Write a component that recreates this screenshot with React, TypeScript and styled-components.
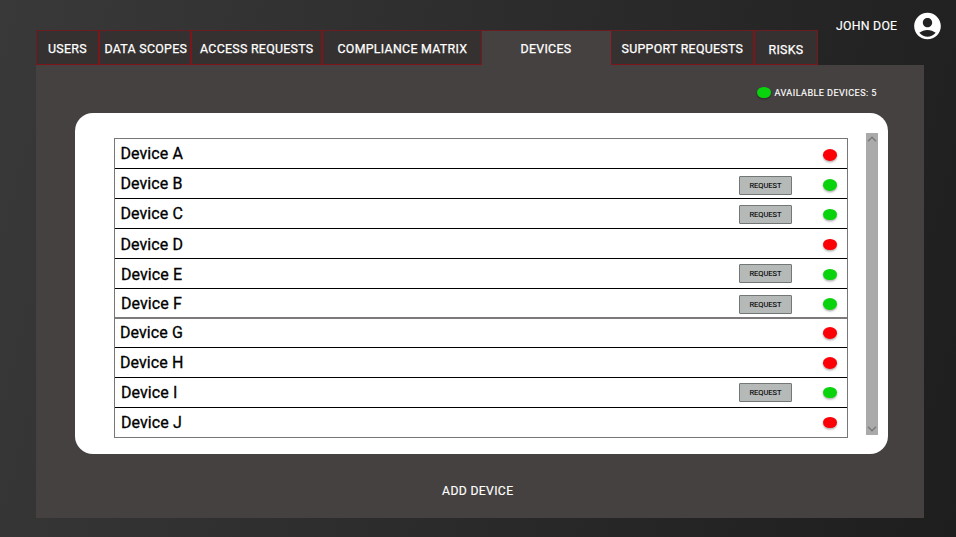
import React from "react";
import styled, { createGlobalStyle } from "styled-components";

const GlobalStyle = createGlobalStyle`
  * { box-sizing: border-box; }
  body { margin: 0; font-family: Roboto, sans-serif; font-weight: 400; }
  button { font: inherit; color: inherit; background: none; border: 0; padding: 0; margin: 0; }
`;

const Page = styled.div`
  width: 956px;
  height: 537px;
  overflow: hidden;
  padding-left: 36px;
  color: #fff;
  background: linear-gradient(105deg, #393939 0%, #1e1e1e 100%);
`;

const Header = styled.header`
  display: flex;
  height: 65px;
`;

const Tabs = styled.nav`
  display: flex;
  align-items: flex-start;
  width: 783px;
  padding-top: 30px;
`;

const Tab = styled.button<{ $width: number; $active?: boolean; $left: number; $drop?: number }>`
  display: flex;
  position: relative;
  flex: none;
  width: ${(p) => p.$width}px;
  height: 35px;
  padding: ${(p) => 10 + (p.$drop ?? 0)}px 0 0 ${(p) => p.$left}px;
  align-items: flex-start;
  white-space: nowrap;
  font-size: 12.4px;
  -webkit-text-stroke: 0.25px #fff;
  line-height: 15px;
  letter-spacing: 0.28px;
  background: ${(p) => (p.$active ? "#454140" : "#353130")};
  border-style: solid;
  border-color: #6a1c20 #7c161b #7c161b #7c161b;
  border-width: ${(p) => (p.$active ? "1px 0 0 0" : "1px 1px 1px 1px")};
`;

const Account = styled.div`
  display: flex;
  align-items: flex-start;
  padding: 10px 0 0 17px;
`;

const AccountName = styled.span`
  width: 75px;
  padding-top: 9px;
  font-size: 12.3px;
  line-height: 15px;
  letter-spacing: 0.25px;
  -webkit-text-stroke: 0.15px #fff;
`;

const Panel = styled.main`
  width: 887.5px;
  height: 453px;
  padding: 20px 36.5px 0 38.5px;
  background: #454140;
`;

const Summary = styled.div`
  display: flex;
  height: 28px;
  padding-left: 682px;
  gap: 4px;
  font-size: 9.1px;
  line-height: 16px;
  letter-spacing: 0.43px;
  -webkit-text-stroke: 0.15px #fff;
  white-space: nowrap;
`;

const Dot = styled.span<{ $available: boolean }>`
  flex: none;
  width: 14px;
  height: 11.5px;
  margin-top: 1.5px;
  border-radius: 50%;
  background: ${(p) => (p.$available ? "#08d30c" : "#fb0007")};
  box-shadow: 0 1.5px 2px rgba(0, 0, 0, 0.3);
`;

const Card = styled.section`
  display: flex;
  width: 813px;
  height: 341px;
  padding: 19px 9px 0 39.5px;
  justify-content: space-between;
  background: #fff;
  border-radius: 18px;
`;

const DeviceList = styled.ul`
  width: 734px;
  height: 300px;
  margin: 6px 0 0;
  padding: 0;
  list-style: none;
  border-left: 1px solid #777;
  border-right: 1px solid #777;
  border-bottom: 1px solid #777;
  color: #000;
`;

const DeviceRow = styled.li<{ $height: number; $line: string }>`
  display: grid;
  grid-template-columns: 624px 84.3px 14px;
  height: ${(p) => p.$height}px;
  border-top: ${(p) => p.$line};
  align-items: start;
`;

const DeviceName = styled.span<{ $top: number; $left: number }>`
  padding: ${(p) => p.$top}px 0 0 ${(p) => p.$left}px;
  font-size: 16px;
  -webkit-text-stroke: 0.3px #000;
  line-height: 20px;
  letter-spacing: 0.08px;
`;

const RequestSlot = styled.div<{ $top: number }>`
  padding-top: ${(p) => p.$top}px;
`;

const RequestButton = styled.button`
  display: block;
  width: 53px;
  height: 19px;
  border: 1px solid #737877;
  border-radius: 1px;
  background: #b5bab9;
  font-size: 7.5px;
  -webkit-text-stroke: 0.1px #000;
  line-height: 18px;
  text-align: center;
  color: #000;
`;

const StatusSlot = styled.div<{ $top: number }>`
  display: flex;
  padding-top: ${(p) => p.$top}px;
`;

const ScrollTrack = styled.div`
  display: flex;
  flex-direction: column;
  justify-content: space-between;
  align-items: center;
  width: 12px;
  height: 302px;
  margin: 0.5px 0.5px 0 0;
  padding: 3px 0;
  background: #aaa;
`;

const AddButton = styled.button`
  display: block;
  margin: 29.5px auto 0;
  font-size: 12.2px;
  line-height: 15px;
  letter-spacing: 0.35px;
  -webkit-text-stroke: 0.15px #fff;
  position: relative;
  left: -3px;
`;

const Chevron = ({ down = false }: { down?: boolean }) => (
  <svg width="10" height="6" viewBox="0 0 10 6" fill="none" stroke="#777" strokeWidth="1.3">
    <path d={down ? "M1 0.8 5 4.8 9 0.8" : "M1 5.2 5 1.2 9 5.2"} />
  </svg>
);

const Avatar = () => (
  <svg width="33" height="32" viewBox="0 0 24 24" fill="#fff">
    <path d="M12 2C6.48 2 2 6.48 2 12s4.48 10 10 10 10-4.48 10-10S17.520 2 12 2zM12 6c1.930 0 3.500 1.570 3.500 3.500S13.930 13 12 13s-3.500-1.570-3.500-3.500S10.070 6 12 6zM12 20c-2.030 0-4.430-.820-6.140-2.880C7.550 15.800 9.680 15 12 15s4.450.800 6.140 2.120C16.430 19.180 14.030 20 12 20z" fillRule="evenodd" />
  </svg>
);

const tabs = [
  { label: "USERS", width: 63, left: 11 },
  { label: "DATA SCOPES", width: 92, left: 4.5 },
  { label: "ACCESS REQUESTS", width: 131, left: 8 },
  { label: "COMPLIANCE MATRIX", width: 159.5, left: 14.5 },
  { label: "DEVICES", width: 129, left: 39, active: true },
  { label: "SUPPORT REQUESTS", width: 143, left: 10 },
  { label: "RISKS", width: 64.5, left: 14, drop: 0.5 },
];

const devices = [
  { name: "A", available: false, height: 30, nameTop: 5, left: 5.5, buttonTop: 0, dotTop: 8.5 },
  { name: "B", available: true, height: 30, nameTop: 5, left: 5.5, buttonTop: 7, dotTop: 8.5 },
  { name: "C", available: true, height: 30, nameTop: 5, left: 5.5, buttonTop: 6, dotTop: 8 },
  { name: "D", available: false, height: 30, nameTop: 6, left: 5.5, buttonTop: 0, dotTop: 8 },
  { name: "E", available: true, height: 30, nameTop: 6, left: 6, buttonTop: 5, dotTop: 8 },
  { name: "F", available: true, height: 29, nameTop: 5, left: 6, buttonTop: 6, dotTop: 7.5 },
  { name: "G", available: false, height: 30, nameTop: 4, left: 5, buttonTop: 0, dotTop: 6.5 },
  { name: "H", available: false, height: 30, nameTop: 5, left: 5, buttonTop: 0, dotTop: 7.5 },
  { name: "I", available: true, height: 30, nameTop: 5, left: 6, buttonTop: 5, dotTop: 7 },
  { name: "J", available: false, height: 30, nameTop: 5, left: 6, buttonTop: 0, dotTop: 7 },
];

const rowLine = (name: string) => {
  if (name === "A") return "1px solid #777";
  if (name === "G") return "2px solid #7c7a7a";
  return "1px solid #000";
};

export default function App() {
  return (
    <>
      <GlobalStyle />
      <Page>
        <Header>
          <Tabs>
            {tabs.map((t) => (
              <Tab key={t.label} $width={t.width} $left={t.left} $active={t.active} $drop={t.drop}>
                {t.label}
              </Tab>
            ))}
          </Tabs>
          <Account>
            <AccountName>JOHN DOE</AccountName>
            <Avatar />
          </Account>
        </Header>
        <Panel>
          <Summary>
            <Dot $available />
            <span>AVAILABLE DEVICES: 5</span>
          </Summary>
          <Card>
            <DeviceList>
              {devices.map((d) => (
                <DeviceRow key={d.name} $height={d.height} $line={rowLine(d.name)}>
                  <DeviceName $top={d.nameTop} $left={d.left}>Device {d.name}</DeviceName>
                  <RequestSlot $top={d.buttonTop}>
                    {d.available && <RequestButton>REQUEST</RequestButton>}
                  </RequestSlot>
                  <StatusSlot $top={d.dotTop}>
                    <Dot $available={d.available} />
                  </StatusSlot>
                </DeviceRow>
              ))}
            </DeviceList>
            <ScrollTrack>
              <Chevron />
              <Chevron down />
            </ScrollTrack>
          </Card>
          <AddButton>ADD DEVICE</AddButton>
        </Panel>
      </Page>
    </>
  );
}
